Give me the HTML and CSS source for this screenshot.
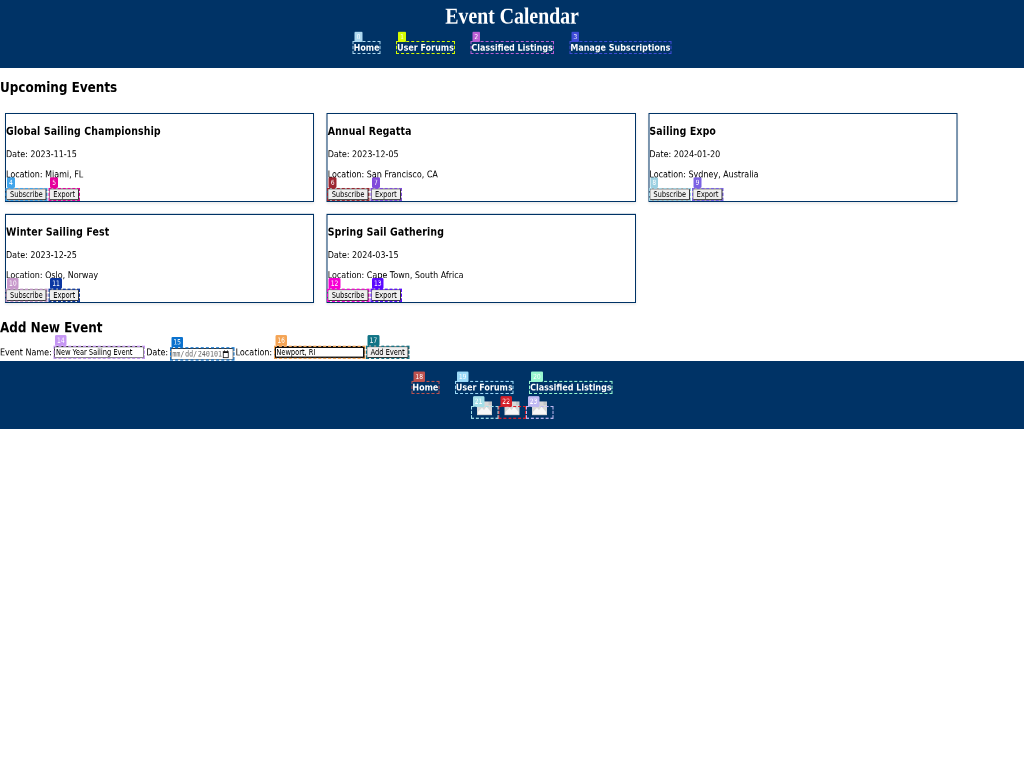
FILE: index.html
```html
<!DOCTYPE html>
<html lang="en">
<head>
<meta charset="utf-8">
<title>Event Calendar</title>
<link rel="stylesheet" href="styles.css">
</head>
<body>
<div class="viewport"><div class="page">
<header class="bar">
  <h1>Event Calendar</h1>
  <nav class="links">
    <a class="mark c0">Home<i>0</i></a>
    <a class="mark c1">User Forums<i>1</i></a>
    <a class="mark c2">Classified Listings<i>2</i></a>
    <a class="mark c3">Manage Subscriptions<i>3</i></a>
  </nav>
</header>
<main>
  <h2>Upcoming Events</h2>
  <section class="events">
    <article class="card"><h3>Global Sailing Championship</h3><p>Date: 2023-11-15</p><p>Location: Miami, FL</p><div class="actions"><span class="mark c4"><button>Subscribe</button><i>4</i></span><span class="mark c5"><button>Export</button><i>5</i></span></div></article>
    <article class="card"><h3>Annual Regatta</h3><p>Date: 2023-12-05</p><p>Location: San Francisco, CA</p><div class="actions"><span class="mark c6"><button>Subscribe</button><i>6</i></span><span class="mark c7"><button>Export</button><i>7</i></span></div></article>
    <article class="card"><h3>Sailing Expo</h3><p>Date: 2024-01-20</p><p>Location: Sydney, Australia</p><div class="actions"><span class="mark c8"><button>Subscribe</button><i>8</i></span><span class="mark c9"><button>Export</button><i>9</i></span></div></article>
    <article class="card"><h3>Winter Sailing Fest</h3><p>Date: 2023-12-25</p><p>Location: Oslo, Norway</p><div class="actions"><span class="mark c10"><button>Subscribe</button><i>10</i></span><span class="mark c11"><button>Export</button><i>11</i></span></div></article>
    <article class="card"><h3>Spring Sail Gathering</h3><p>Date: 2024-03-15</p><p>Location: Cape Town, South Africa</p><div class="actions"><span class="mark c12"><button>Subscribe</button><i>12</i></span><span class="mark c13"><button>Export</button><i>13</i></span></div></article>
  </section>
  <h2 class="second">Add New Event</h2>
  <form class="add">
    <label>Event Name:</label>
    <span class="mark c14"><span class="field">New Year Sailing Event</span><i>14</i></span>
    <label>Date:</label>
    <span class="mark date c15"><span class="field"><span>mm/</span><span>dd/</span><span>240101</span><svg width="13" height="14" viewBox="0 0 13 14"><path d="M1.5 2.5h10v10.5h-10z" fill="none" stroke="#111" stroke-width="1.6"/><path d="M1.5 2.5h10v2h-10zM3.5 0v2M9.5 0v2" fill="#111" stroke="#111"/></svg></span><i>15</i></span>
    <label>Location:</label>
    <span class="mark c16"><span class="field focus">Newport, RI</span><i>16</i></span>
    <span class="mark c17"><button type="button">Add Event</button><i>17</i></span>
  </form>
</main>
<footer class="bar foot">
  <nav class="links">
    <a class="mark c18">Home<i>18</i></a>
    <a class="mark c19">User Forums<i>19</i></a>
    <a class="mark c20">Classified Listings<i>20</i></a>
  </nav>
  <div class="social">
    <a class="mark c21"><svg width="30" height="24" viewBox="0 0 30 24"><path d="M0 0h30v24H0z" fill="#d8d8d8"/><path d="M23 0v6h7V0z" fill="#c3c6c9"/><path d="M2 22v-4l8-7 4 4 5-6 9 9v4z" fill="#f7f7f7"/></svg><i>21</i></a>
    <a class="mark c22"><svg width="30" height="24" viewBox="0 0 30 24"><path d="M0 0h30v24H0z" fill="#d8d8d8"/><path d="M23 0v6h7V0z" fill="#c3c6c9"/><path d="M2 22v-4l8-7 4 4 5-6 9 9v4z" fill="#f7f7f7"/></svg><i>22</i></a>
    <a class="mark c23"><svg width="30" height="24" viewBox="0 0 30 24"><path d="M0 0h30v24H0z" fill="#d8d8d8"/><path d="M23 0v6h7V0z" fill="#c3c6c9"/><path d="M2 22v-4l8-7 4 4 5-6 9 9v4z" fill="#f7f7f7"/></svg><i>23</i></a>
  </div>
</footer>
</div></div>
</body>
</html>
```
FILE: styles.css
```css
* { box-sizing: border-box; }
body { margin: 0; background: #fff; }
.viewport { width: 1024px; height: 768px; overflow: hidden; }
/* Large layout fitted to the viewport */
.page {
  width: 2048px; height: 1334px; background: #fff;
  transform: scale(.5, .576); transform-origin: 0 0; will-change: transform;
  font: 16px/19px "DejaVu Sans", sans-serif; color: #000;
}
.bar { height: 118px; background: #003366; color: #fff; text-align: center; padding-top: 5px; }
h1 { margin: 0; font: bold 40px/46px "Liberation Serif", serif; letter-spacing: -.2px; }
.links { display: flex; justify-content: center; gap: 35px; margin-top: 22px; font-weight: bold; }
h2 { margin: 0; padding: 20px 0; font-size: 24px; line-height: 28px; }
.second { padding: 19px 0; }
.events { display: flex; flex-wrap: wrap; column-gap: 5px; }
.card {
  width: 618.4px; height: 155px; margin: 10px; border: 2px solid #003366;
  padding-top: 19px; box-shadow: 0 2px 5px rgba(0,0,0,.1);
}
h3 { margin: 0 0 19px; font-size: 18.72px; line-height: 22px; letter-spacing: .3px; }
p { margin: 0 0 16px; }
.actions { display: flex; gap: 5px; margin-top: -1px; }
button {
  display: block; height: 21px; padding: 0 6px; border: 2px outset #888; border-radius: 3px;
  background: #efefef; color: #000; font: 13.333px/17px "DejaVu Sans", sans-serif;
}
.mark { position: relative; display: block; }
.mark::after { content: ""; position: absolute; inset: -1px -2px -1px -1px; border: 2px dashed var(--c); }
.mark > i {
  position: absolute; z-index: 2; left: 2px; bottom: calc(100% + 1px); height: 18px; padding: 2px 4px;
  border-radius: 2px; background: var(--c); color: #fff; font: normal 12px/14px "DejaVu Sans", sans-serif;
}
.links .mark::after { inset: -2px -2px -2px; }
.links .mark > i { left: 2px; bottom: 100%; }
.add { display: flex; align-items: center; gap: 4.5px; height: 23px; margin-top: -1px; }
.add label { position: relative; top: -1px; }
.add .mark { top: -1px; }
.field {
  display: flex; align-items: center; width: 180px; height: 21px; padding: 0 2px;
  border: 2px inset #888; background: #fff; font-size: 13.333px; white-space: nowrap;
}
.focus { border: 3px solid #111; padding: 0 1px; }
.add .date { top: 2px; }
.date .field { width: 126px; color: #666; font-family: "DejaVu Sans Mono", monospace; font-size: 13.333px; gap: 1.5px; }
.foot { margin-top: 3px; }
.foot .links { margin-top: 31px; }
.social { display: flex; justify-content: center; margin-top: 15px; }
.social .mark { width: 55px; height: 24px; }
.social .mark::after { inset: 8px 0 -6px; }
.social .mark > i { left: 4px; bottom: 15px; }
.social svg { display: block; margin: 0 auto; }
.c0 { --c: #add8ef; } .c1 { --c: #d5fb00; } .c2 { --c: #b95fd3; } .c3 { --c: #3f4bd8; }
.c4 { --c: #42a5eb; } .c5 { --c: #e6009b; } .c6 { --c: #9d2630; } .c7 { --c: #814bdb; }
.c8 { --c: #9bd0e1; } .c9 { --c: #7b62e4; } .c10 { --c: #c798cb; } .c11 { --c: #0b36a2; }
.c12 { --c: #f500d4; } .c13 { --c: #5a08ff; } .c14 { --c: #c596f3; } .c15 { --c: #0b72ce; }
.c16 { --c: #f4a455; } .c17 { --c: #107385; } .c18 { --c: #bd524f; } .c19 { --c: #9bd9f7; }
.c20 { --c: #98f8d0; } .c21 { --c: #a5dfe8; } .c22 { --c: #d5202a; } .c23 { --c: #c0b9f2; }
```
